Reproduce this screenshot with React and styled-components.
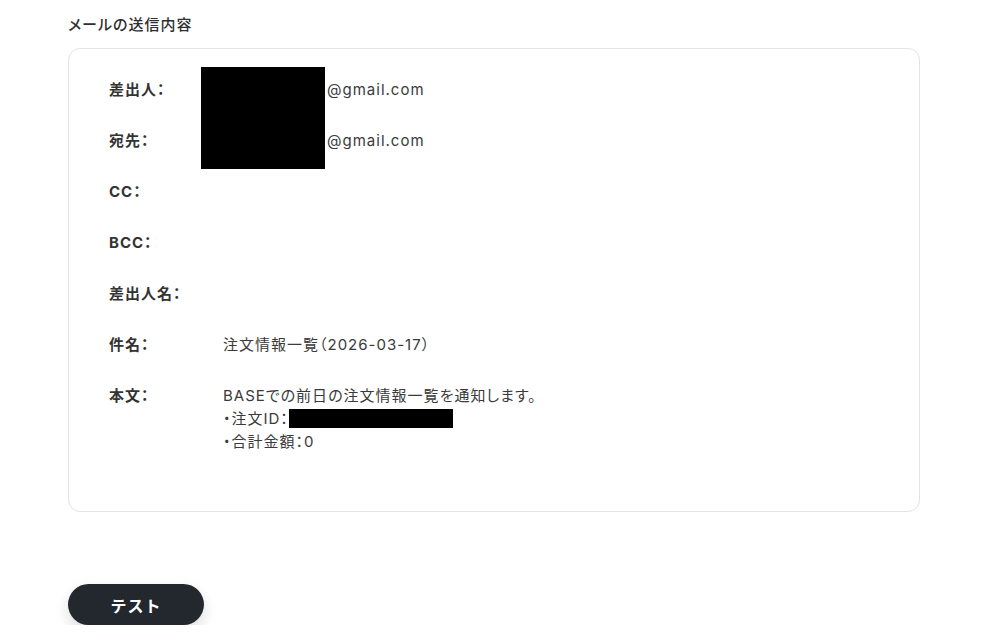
import React from "react";
import styled, { createGlobalStyle } from "styled-components";

const rows = [
  { label: "差出人：", redact: true, value: "@gmail.com" },
  { label: "宛先：", redact: true, value: "@gmail.com" },
  { label: "CC：" },
  { label: "BCC：" },
  { label: "差出人名：" },
  { label: "件名：", value: "注文情報一覧（2026-03-17）" },
];

function App() {
  return (
    <Page>
      <GlobalStyle />
      <Heading>メールの送信内容</Heading>
      <Card>
        {rows.map((row) => (
          <Row key={row.label}>
            <Label>{row.label}</Label>
            <Value>
              {row.redact && <Redact />}
              {row.value}
            </Value>
          </Row>
        ))}
        <Row>
          <Label>本文：</Label>
          <Body>
            <div>BASEでの前日の注文情報一覧を通知します。</div>
            <div>
              ・注文ID：<InlineRedact />
            </div>
            <div>・合計金額：0</div>
          </Body>
        </Row>
      </Card>
      <TestButton type="button">テスト</TestButton>
    </Page>
  );
}

const GlobalStyle = createGlobalStyle`
  body {
    margin: 0;
    background: #fff;
    font-family: Inter, "Noto Sans CJK JP", sans-serif;
    font-feature-settings: "palt";
    letter-spacing: 1px;
    color: #333;
  }
`;

const Page = styled.div`
  padding: 14px 81px 0 68px;
  display: flex;
  flex-direction: column;
  align-items: flex-start;
`;

const Heading = styled.h2`
  margin: 0;
  font-size: 15px;
  font-weight: 500;
  line-height: 22px;
  color: #2f2f2f;
`;

const Card = styled.section`
  align-self: stretch;
  margin-top: 12px;
  border: 1px solid #e1e4ea;
  border-radius: 12px;
  padding: 29px 40px 58px;
  display: flex;
  flex-direction: column;
  gap: 28px;
`;

const Row = styled.div`
  display: grid;
  grid-template-columns: 114px 1fr;
  align-items: start;
`;

const Label = styled.div`
  font-size: 15px;
  font-weight: 700;
  line-height: 23px;
  color: #333;
`;

const Value = styled.div`
  display: flex;
  align-items: center;
  min-height: 23px;
  font-size: 15px;
  line-height: 23px;
  color: #3a3a3a;
`;

const Redact = styled.span`
  display: block;
  width: 124px;
  height: 51px;
  margin: -11.5px 2px -16.5px -22px;
  background: #000;
`;

const Body = styled.div`
  font-size: 15px;
  line-height: 23px;
  color: #3a3a3a;
`;

const InlineRedact = styled.span`
  display: inline-block;
  width: 164px;
  height: 19px;
  vertical-align: -4px;
  background: #000;
`;

const TestButton = styled.button`
  margin-top: 72px;
  width: 136px;
  height: 41px;
  border: none;
  border-radius: 21px;
  background: #23282f;
  color: #fff;
  font-family: inherit;
  font-size: 16px;
  font-weight: 700;
  letter-spacing: 1px;
  box-shadow: 0 6px 14px rgba(0, 0, 0, 0.14);
  cursor: pointer;
`;

export default App;
